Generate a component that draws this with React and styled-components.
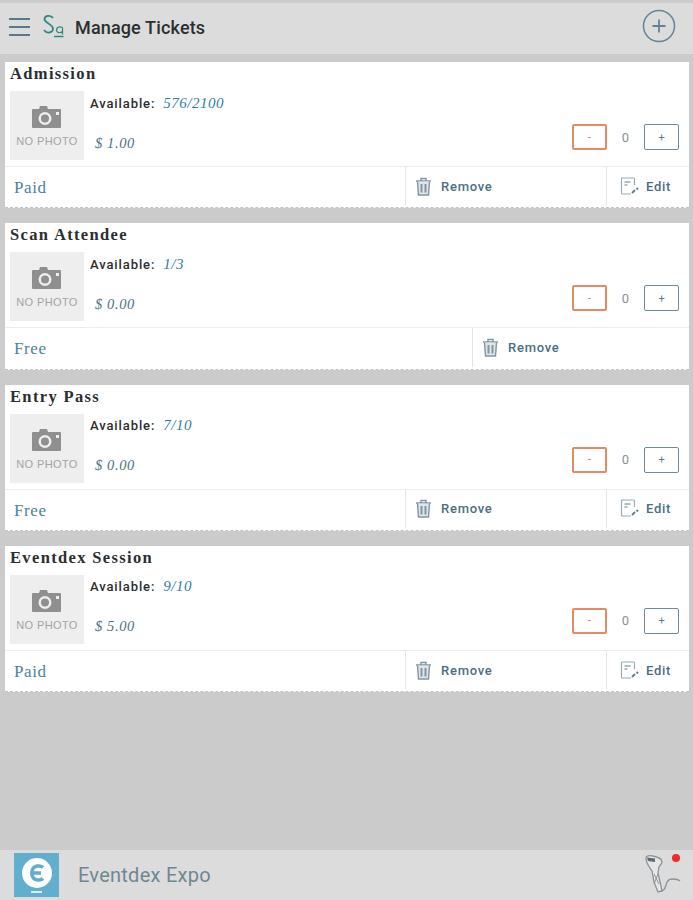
import React from 'react';
import styled, { createGlobalStyle } from 'styled-components';

const Global = createGlobalStyle`
  html, body { margin: 0; padding: 0; }
  body { background: #cbcbcb; font-family: Roboto, "Liberation Sans", sans-serif; }
`;

const Page = styled.div`
  width: 693px; height: 900px;
  display: flex; flex-direction: column;
  background: #cbcbcb; overflow: hidden;
`;

const Header = styled.header`
  height: 51px; margin-top: 3px; padding: 0 17px 0 9px;
  display: flex; align-items: center;
  background: #dcdcdc;
`;
const MenuButton = styled.div`
  width: 21px; display: flex; flex-direction: column; gap: 6px;
  margin-top: -3px;
  span { display: block; height: 2px; background: #567a8c; }
`;
const Logo = styled.svg`
  width: 22px; height: 24px; margin: -6px 0 0 12px;
`;
const Title = styled.h1`
  margin: -2px 0 0 11px; flex: 1;
  font-size: 18px; font-weight: 500; letter-spacing: 0.15px; color: #2b2f31;
`;
const AddButton = styled.svg`
  width: 34px; height: 34px; margin-top: -5px;
`;

const List = styled.main`
  flex: 1; padding: 8px 4px 0 5px;
  display: flex; flex-direction: column; gap: 15px;
`;
const Card = styled.section`
  height: 146.33px; display: flex; flex-direction: column;
  background: #fff;
  border-bottom: 1px dashed #c4c4c4;
  box-sizing: border-box;
`;
const CardBody = styled.div`
  height: 105px; padding: 0 10px 0 5px; box-sizing: border-box;
  display: flex; flex-direction: column;
  border-bottom: 1px solid #ececec;
`;
const TicketName = styled.h2`
  margin: 0; height: 29px; line-height: 23px;
  font-family: "Liberation Serif", serif;
  font-size: 16.5px; font-weight: 700; letter-spacing: 1.35px; color: #2a2e30;
`;
const BodyRow = styled.div`
  display: flex; flex: 1;
`;
const Photo = styled.div`
  width: 74px; height: 69px; flex: none;
  display: flex; flex-direction: column; align-items: center;
  background: #eeeeee; padding-top: 13px; box-sizing: border-box;
  svg { width: 30px; height: 25px; }
  span { margin-top: 6px; font-size: 11px; letter-spacing: 0.4px; color: #a4a4a4; font-family: "Liberation Sans", sans-serif; }
`;
const Info = styled.div`
  flex: 1; padding: 3.5px 0 0 6px;
  display: flex; flex-direction: column;
`;
const Availability = styled.div`
  display: flex; align-items: baseline; gap: 8px; height: 18px;
`;
const AvailableLabel = styled.span`
  font-size: 13px; font-weight: 500; letter-spacing: 0.9px; color: #2b2e30;
`;
const AvailableValue = styled.span`
  font-family: "Liberation Serif", serif; font-style: italic;
  font-size: 15px; letter-spacing: 0.5px; color: #2e7f9f;
`;
const Price = styled.div`
  margin: 22px 0 0 5px;
  font-family: "Liberation Serif", serif; font-style: italic;
  font-size: 14.5px; letter-spacing: 0.6px; color: #4a7186;
`;
const Quantity = styled.div`
  display: flex; align-items: center; align-self: flex-start;
  margin-top: 33px;
`;
const QtyButton = styled.div`
  width: 35px; height: 26px; box-sizing: border-box;
  display: flex; align-items: center; justify-content: center;
  border: ${({ $minus }) => ($minus ? '2px solid #e58a63' : '1.5px solid #6d8b9a')};
  border-radius: 2px;
  font-size: 11px;
  color: ${({ $minus }) => ($minus ? '#d9694a' : '#5d7a89')};
`;
const QtyValue = styled.span`
  width: 37px; text-align: center; font-size: 13px; color: #8f8f8f;
`;
const CardFooter = styled.div`
  flex: 1; display: flex; align-items: stretch;
`;
const PriceType = styled.div`
  flex: 1; padding: 2px 0 0 9px;
  display: flex; align-items: center;
  font-family: "Liberation Serif", serif;
  font-size: 17px; letter-spacing: 0.6px; color: #4b83a0;
`;
const FooterAction = styled.div`
  width: ${({ $width }) => $width}px; box-sizing: border-box;
  padding-left: ${({ $pad }) => $pad}px;
  display: flex; align-items: center; gap: ${({ $gap }) => $gap}px;
  border-left: 1px solid #e4e4e4; margin-bottom: 2px;
  font-size: 13px; font-weight: 500; letter-spacing: 0.75px; color: #4a6f83;
  svg { flex: none; }
`;

const BottomBar = styled.footer`
  height: 50px; padding: 0 9px 0 14px;
  display: flex; align-items: center;
  background: #dcdcdc;
`;
const AppLogo = styled.svg`
  width: 45px; height: 44px; flex: none;
`;
const AppName = styled.span`
  margin-left: 19px; flex: 1;
  font-size: 20px; letter-spacing: 0.25px; color: #6e8893;
`;
const Scanner = styled.div`
  position: relative; width: 40px; height: 42px;
  svg { width: 40px; height: 42px; display: block; }
`;
const StatusDot = styled.span`
  position: absolute; top: 0; right: 4px;
  width: 8px; height: 8px; border-radius: 50%;
  background: #ee2a2a;
`;

const CameraIcon = () => (
  <svg viewBox="0 0 30 25">
    <path fill="#8f8f8f" fillRule="evenodd" d="M1 5h6l1-3h7l1 3h12a1 1 0 0 1 1 1v17a1 1 0 0 1-1 1H1a1 1 0 0 1-1-1V6a1 1 0 0 1 1-1zm12 3a6.5 6.5 0 1 0 0 13 6.5 6.5 0 0 0 0-13zm0 2.5a4 4 0 1 1 0 8 4 4 0 0 1 0-8zM24 8v3h3V8z" />
  </svg>
);

const TrashIcon = () => (
  <svg width="17" height="19" viewBox="0 0 17 19" fill="none" stroke="#7f96a3" strokeWidth="1.4">
    <path d="M1 4h15M6 4V1.500h5V4" />
    <path d="M2.500 4.500l1 13.500h10l1-13.500" fill="#dfe5e8" />
    <path d="M6.500 7v8.500M10.500 7v8.500" strokeWidth="2" />
  </svg>
);

const EditIcon = () => (
  <svg width="19" height="19" viewBox="0 0 19 19" fill="none" stroke="#98aab4" strokeWidth="1.2">
    <path d="M11 17H2.500a1 1 0 0 1-1-1V2a1 1 0 0 1 1-1h11a1 1 0 0 1 1 1v6" />
    <path d="M4.500 5h6M4.500 8h3" strokeWidth="1.600" />
    <path d="M12 16l3-3" stroke="#5c7c8e" strokeWidth="1.800" />
    <path d="M16.500 11l1.500 1.500" stroke="#5c7c8e" strokeWidth="1.800" />
  </svg>
);

const tickets = [
  { name: 'Admission', available: '576/2100', price: '$ 1.00', type: 'Paid', editable: true },
  { name: 'Scan Attendee', available: '1/3', price: '$ 0.00', type: 'Free', editable: false },
  { name: 'Entry Pass', available: '7/10', price: '$ 0.00', type: 'Free', editable: true },
  { name: 'Eventdex Session', available: '9/10', price: '$ 5.00', type: 'Paid', editable: true },
];

const Ticket = ({ name, available, price, type, editable }) => (
  <Card>
    <CardBody>
      <TicketName>{name}</TicketName>
      <BodyRow>
        <Photo>
          <CameraIcon />
          <span>NO PHOTO</span>
        </Photo>
        <Info>
          <Availability>
            <AvailableLabel>Available:</AvailableLabel>
            <AvailableValue>{available}</AvailableValue>
          </Availability>
          <Price>{price}</Price>
        </Info>
        <Quantity>
          <QtyButton $minus>-</QtyButton>
          <QtyValue>0</QtyValue>
          <QtyButton>+</QtyButton>
        </Quantity>
      </BodyRow>
    </CardBody>
    <CardFooter>
      <PriceType>{type}</PriceType>
      <FooterAction $width={editable ? 201 : 217} $pad={9} $gap={9}>
        <TrashIcon />
        Remove
      </FooterAction>
      {editable && (
        <FooterAction $width={83} $pad={13} $gap={7}>
          <EditIcon />
          Edit
        </FooterAction>
      )}
    </CardFooter>
  </Card>
);

export default function App() {
  return (
    <Page>
      <Global />
      <Header>
        <MenuButton><span /><span /><span /></MenuButton>
        <Logo viewBox="0 0 22 24" fill="none" stroke="#2f8a80" strokeWidth="1.800">
          <path d="M11 4C9 1 3 1 2.500 5c-.4 4 9 5 8.500 10-.4 4-6 5-9 1" />
          <path d="M20.500 13.500c-2.500-1.500-6-.5-6 2.500s3.500 3.500 6 1.500M20.500 13.500v7M12 22.500h9.500" strokeWidth="1.300" />
        </Logo>
        <Title>Manage Tickets</Title>
        <AddButton viewBox="0 0 34 34" fill="none" stroke="#5f8496">
          <circle cx="17" cy="17" r="15.500" strokeWidth="1.500" />
          <path d="M17 10.500v13M10.500 17h13" strokeWidth="1.800" />
        </AddButton>
      </Header>
      <List>
        {tickets.map(t => <Ticket key={t.name} {...t} />)}
      </List>
      <BottomBar>
        <AppLogo viewBox="0 0 45 44">
          <rect width="45" height="44" fill="#62aecd" />
          <circle cx="23" cy="20" r="15" fill="#fff" />
          <path d="M29 14.500c-2-2-9-2.500-10.500 2-1 3-1 5 0 7 1.500 4.500 8.500 4 10.500 2M18 20h9" fill="none" stroke="#62aecd" strokeWidth="3.500" />
          <rect x="17" y="38" width="11" height="2" fill="#d4ecf5" />
        </AppLogo>
        <AppName>Eventdex Expo</AppName>
        <Scanner>
          <svg viewBox="0 0 40 42" fill="none" stroke="#8a9499" strokeWidth="1.300">
            <path d="M2 4c0-2 3-3 7-2 5 1 9 3 9 6 0 2-2 3-3 5l-1 6 3 13 1 5-4 1-4-10-2-11c-3-4-6-8-6-13z" fill="#e6e6e6" />
            <path d="M3 3.500l8 1 0 3.500-7-1z" fill="#5b6b74" stroke="none" />
            <path d="M17 37c3 0 4-2 5-6s3-6 6-6 6 0 8 2" />
            <path d="M10 20l5 10M14 20l-4 10" strokeWidth="1" />
          </svg>
          <StatusDot />
        </Scanner>
      </BottomBar>
    </Page>
  );
}
